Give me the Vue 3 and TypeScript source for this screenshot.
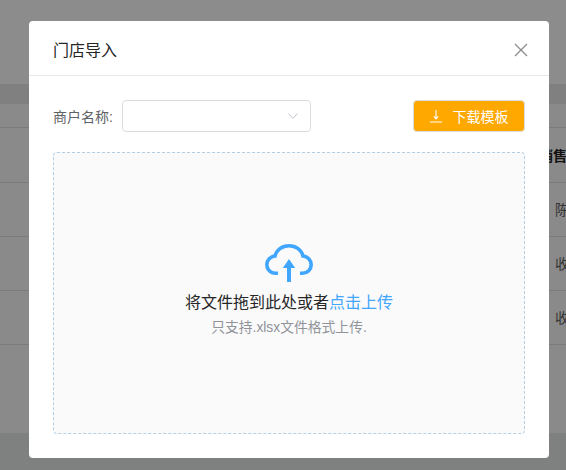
<script setup lang="ts">
const rows: string[] = ['陈', '收', '收']
</script>

<template>
  <div class="page">
    <div class="top"></div>
    <div class="band"></div>
    <div class="table">
      <div class="tr lead"></div>
      <div class="tr head-row"><span class="th">销售</span></div>
      <div v-for="(r, i) in rows" :key="i" class="tr"><span class="td">{{ r }}</span></div>
      <div class="rest"></div>
    </div>
    <div class="foot"></div>

    <div class="modal">
      <div class="head">
        <span class="title">门店导入</span>
        <svg class="close" width="14" height="14" viewBox="0 0 14 14"><path d="M1 1l12 12M13 1L1 13" stroke="#8c8c8c" stroke-width="1.3" fill="none" /></svg>
      </div>
      <div class="body">
        <div class="toolbar">
          <span class="label">商户名称:</span>
          <div class="select">
            <svg width="10" height="6" viewBox="0 0 10 6"><path d="M.5.5L5 5.300 9.500.5" stroke="#c0c4cc" stroke-width="1" fill="none" /></svg>
          </div>
          <button class="btn">
            <svg width="12" height="13" viewBox="0 0 12 13"><path d="M6 0v8.500M3.800 6.300L6 8.800l2.200-2.500M0 12h12" stroke="#fff" stroke-width="1.100" fill="none" /></svg>
            <span>下载模板</span>
          </button>
        </div>
        <div class="drop">
          <svg class="cloud" width="48" height="38" viewBox="0 0 48 38">
            <path d="M13 29.200H10.500C5.500 29.200 1.800 25.300 1.800 20.700 1.800 16 5.500 12.300 10 12 11.500 6 17 1.800 24 1.800S36.500 6 38 12C42.500 12.300 46.200 16 46.200 20.700 46.200 25.300 42.500 29.200 37.500 29.200H35" fill="none" stroke="#40a6ff" stroke-width="3.600" />
            <path d="M24 15L17.800 24H22V38H26V24H30.200Z" fill="#40a6ff" />
          </svg>
          <div class="main">将文件拖到此处或者<em>点击上传</em></div>
          <div class="tip">只支持.xlsx文件格式上传.</div>
        </div>
      </div>
    </div>
  </div>
</template>

<style>
html, body { margin: 0; padding: 0; }
</style>

<style scoped>
.page {
  position: relative;
  width: 566px;
  height: 470px;
  overflow: hidden;
  background: #808080;
  display: flex;
  flex-direction: column;
  font-family: "Liberation Sans", "Noto Sans CJK SC", sans-serif;
}
.top { height: 84px; background: #8c8c8c; flex: none; }
.band { height: 20px; background: #808080; flex: none; }
.table { flex: 0 0 329px; background: #8a8a8a; display: flex; flex-direction: column; }
.tr {
  height: 54px;
  flex: none;
  box-sizing: border-box;
  border-bottom: 1px solid #7b7b7b;
  position: relative;
}
.lead { height: 24px; }
.head-row { height: 55px; }
.rest { flex: 1; }
.th { position: absolute; left: 539px; top: 17px; font-size: 14px; font-weight: 700; color: #111; white-space: nowrap; }
.td { position: absolute; left: 555px; top: 16px; font-size: 14px; color: #333; }
.foot { flex: 1; background: #7f8080; }

.modal {
  position: absolute;
  left: 29px;
  top: 21px;
  width: 520px;
  height: 437px;
  background: #fff;
  border-radius: 4px;
  display: flex;
  flex-direction: column;
}
.head {
  height: 55px;
  box-sizing: border-box;
  border-bottom: 1px solid #e8e8e8;
  padding: 2px 21px 0 24px;
  display: flex;
  align-items: center;
  justify-content: space-between;
}
.title { font-size: 16px; color: #262626; }
.close { margin-top: 1px; }
.body { flex: 1; padding: 24px; display: flex; flex-direction: column; gap: 20px; }
.toolbar { display: flex; align-items: center; height: 32px; }
.label { font-size: 14px; color: #606266; width: 69px; flex: none; }
.select {
  width: 189px;
  height: 32px;
  box-sizing: border-box;
  border: 1px solid #dcdcdc;
  border-radius: 4px;
  background: #fff;
  display: flex;
  align-items: center;
  justify-content: flex-end;
  padding-right: 12px;
}
.btn {
  margin-left: auto;
  width: 112px;
  height: 32px;
  box-sizing: border-box;
  border: 1px solid #dcdcdc;
  border-radius: 4px;
  background: #ffa800;
  color: #fff;
  font: inherit;
  font-size: 14px;
  display: flex;
  align-items: center;
  justify-content: center;
  gap: 11px;
  padding: 0;
}
.drop {
  height: 282px;
  box-sizing: border-box;
  border: 1px dashed #b3d0e6;
  border-radius: 4px;
  background: #fafafa;
  display: flex;
  flex-direction: column;
  align-items: center;
  padding-top: 91px;
}
.cloud { display: block; }
.main { margin-top: 10px; font-size: 16px; line-height: 22px; color: #262626; }
.main em { font-style: normal; color: #40a6ff; }
.tip { margin-top: 5px; font-size: 13.8px; line-height: 18px; color: #909399; }
</style>
